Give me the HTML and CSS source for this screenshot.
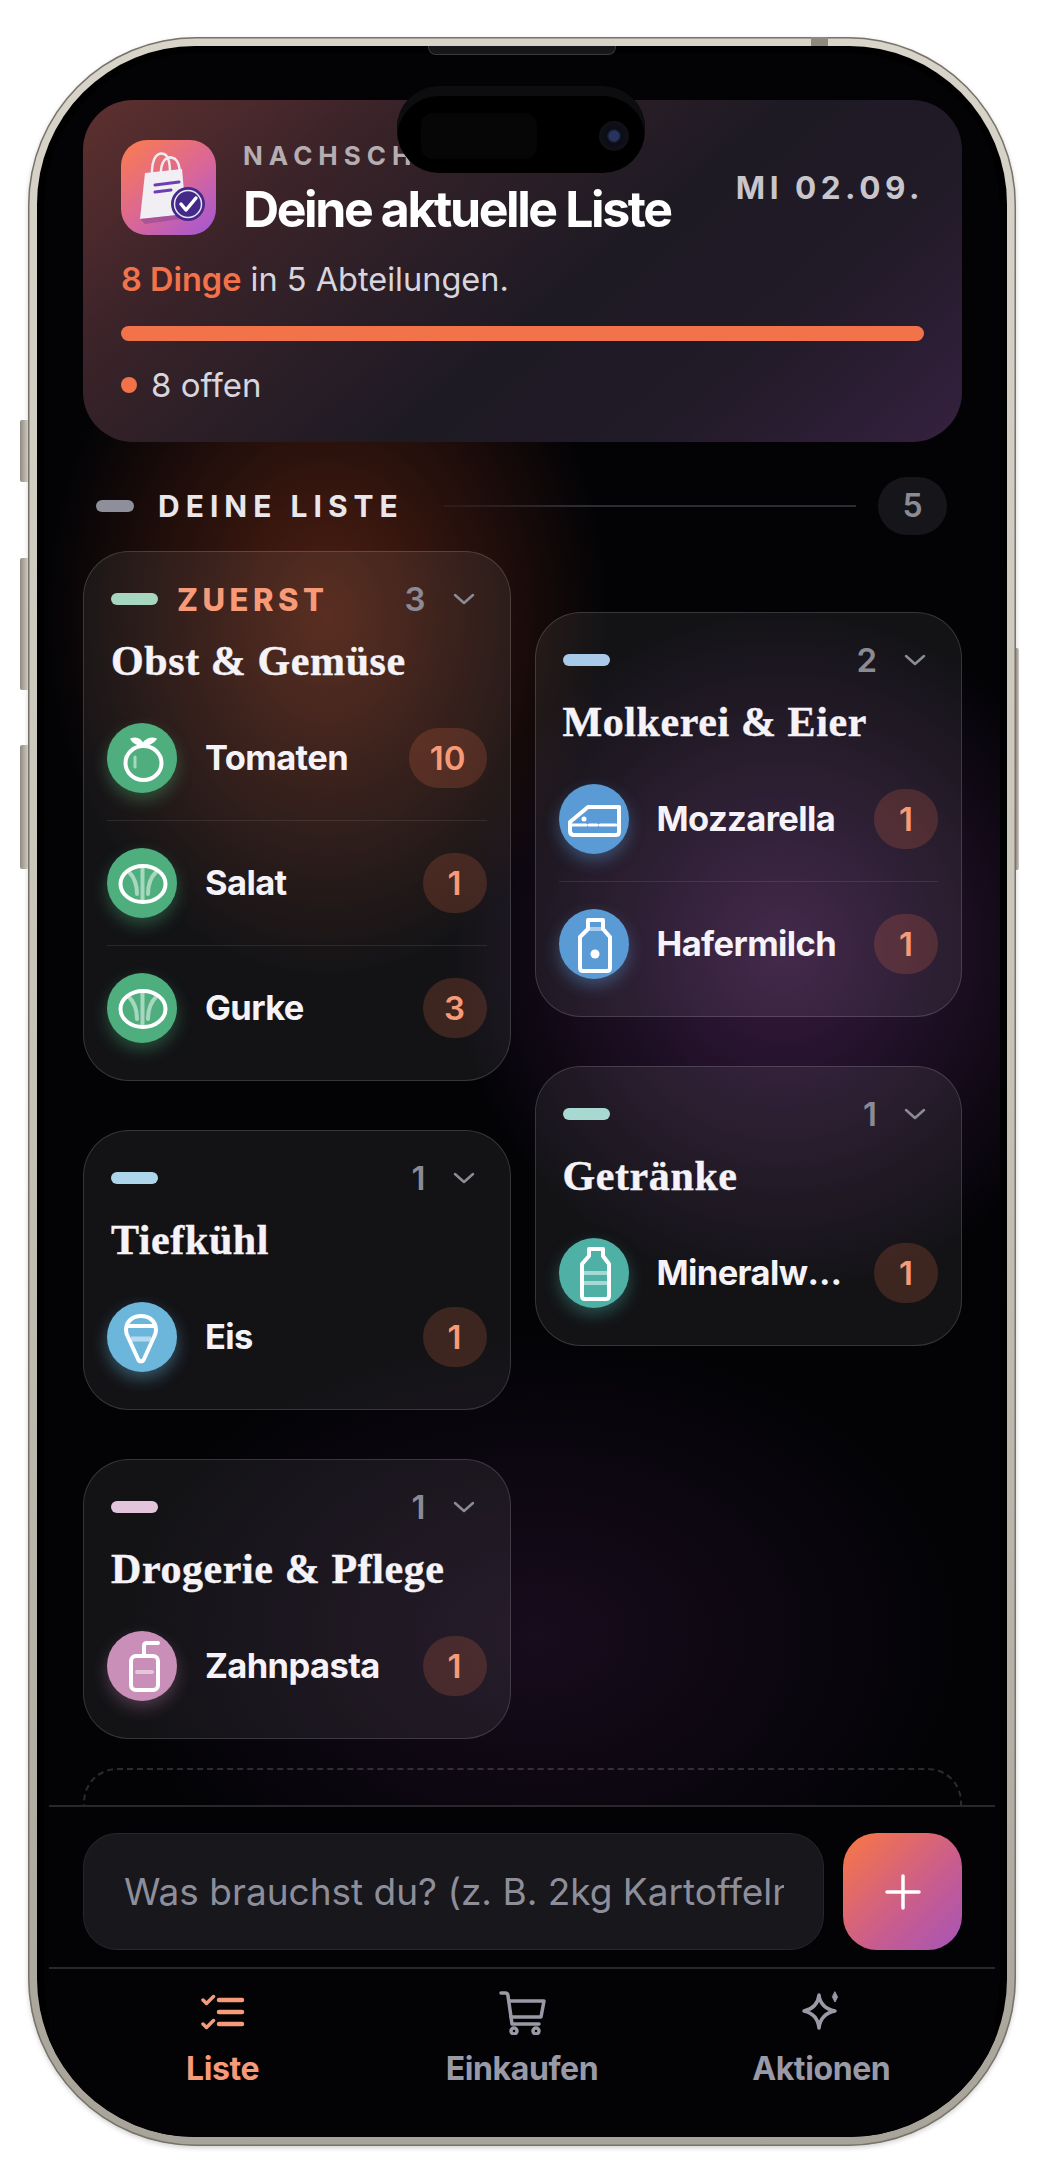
FILE: index.html
```html
<!DOCTYPE html>
<html lang="de">
<head>
    <meta charset="UTF-8">
    <title>Nachschub</title>
    <link rel="stylesheet" href="styles.css">
</head>
<body>
<div class="phone">
    <span class="side-btn mute"></span>
    <span class="side-btn vol-up"></span>
    <span class="side-btn vol-down"></span>
    <span class="side-btn power"></span>
    <span class="band band-top"></span>
    <div class="screen">
        <span class="speaker"></span>
        <div class="island"><span class="sensor"></span><span class="lens"></span></div>

        <main class="main">
            <section class="hero">
                <div class="hero-head">
                    <div class="app-icon">
                        <svg viewBox="0 0 95 95" width="95" height="95">
                            <path d="M31 37C30 15 38 12 43 14C48 16 49 24 49 33" fill="none" stroke="#ececf0" stroke-width="2.5"/>
                            <path d="M40 36C39 19 47 16 52 18C58 20 59 28 59 36" fill="none" stroke="#ececf0" stroke-width="2.5"/>
                            <path d="M24 33L61 29L65 74L19 79Z" fill="#f1eff3"/>
                            <path d="M19 79L65 74L66 78L24 84Z" fill="#7d3f8a" opacity=".45"/>
                            <path d="M34 45L58 42M34 52L50 50" stroke="#6a3fb5" stroke-width="3" stroke-linecap="round"/>
                            <circle cx="67" cy="64" r="17" fill="#44298a"/>
                            <circle cx="67" cy="64" r="13.5" fill="none" stroke="#e9e4f5" stroke-width="1.5"/>
                            <path d="M60 64L65 70L75 58" fill="none" stroke="#fff" stroke-width="3.5" stroke-linecap="round" stroke-linejoin="round"/>
                        </svg>
                    </div>
                    <div class="hero-titles">
                        <div class="eyebrow">NACHSCHUB</div>
                        <h1>Deine aktuelle Liste</h1>
                    </div>
                    <div class="hero-date">MI 02.09.</div>
                </div>
                <p class="summary"><b>8 Dinge</b> in 5 Abteilungen.</p>
                <div class="bar"></div>
                <div class="open-count"><i class="dot"></i>8 offen</div>
            </section>

            <div class="section-head">
                <span class="pill pill-grey"></span>
                <h2>DEINE LISTE</h2>
                <span class="section-line"></span>
                <span class="section-count">5</span>
            </div>

            <div class="columns">
                <div class="col">
                    <article class="card">
                        <div class="card-head">
                            <span class="pill pill-green"></span>
                            <span class="first-tag">ZUERST</span>
                            <span class="count">3</span>
                            <svg class="chev" viewBox="0 0 22 12"><path d="M2 2L11 10L20 2"/></svg>
                        </div>
                        <h3>Obst &amp; Gemüse</h3>
                        <ul class="rows">
                            <li class="row">
                                <span class="ic ic-green">
                                    <svg viewBox="0 0 70 70">
                                        <ellipse cx="36.5" cy="40" rx="18" ry="17"/>
                                        <path d="M36 23C31 22 26 20 24 16C30 14 34 17 36 21C38 17 43 14 49 16C46 20 41 22 36 23Z" fill="#fff" stroke-width="1.5"/>
                                        <path class="soft" d="M28 34V44" stroke-width="3"/>
                                    </svg>
                                </span>
                                <span class="name">Tomaten</span>
                                <span class="qty">10</span>
                            </li>
                            <li class="row">
                                <span class="ic ic-green">
                                    <svg viewBox="0 0 70 70">
                                        <path class="soft" d="M35.500 18V54M22 24C27 29 30 36 30 46M49 24C44 29 41 36 41 46"/>
                                        <ellipse cx="36" cy="36" rx="22.500" ry="18"/>
                                    </svg>
                                </span>
                                <span class="name">Salat</span>
                                <span class="qty">1</span>
                            </li>
                            <li class="row">
                                <span class="ic ic-green">
                                    <svg viewBox="0 0 70 70">
                                        <path class="soft" d="M35.500 18V54M22 24C27 29 30 36 30 46M49 24C44 29 41 36 41 46"/>
                                        <ellipse cx="36" cy="36" rx="22.500" ry="18"/>
                                    </svg>
                                </span>
                                <span class="name">Gurke</span>
                                <span class="qty">3</span>
                            </li>
                        </ul>
                    </article>

                    <article class="card">
                        <div class="card-head">
                            <span class="pill pill-sky"></span>
                            <span class="count">1</span>
                            <svg class="chev" viewBox="0 0 22 12"><path d="M2 2L11 10L20 2"/></svg>
                        </div>
                        <h3>Tiefkühl</h3>
                        <ul class="rows">
                            <li class="row">
                                <span class="ic ic-sky">
                                    <svg viewBox="0 0 70 70">
                                        <path d="M19 28C19 19 26 14 34 14C42 14 49 19 49 28C49 31 48 33 47 35L37 57C36 60 32 60 31 57L21 35C20 33 19 31 19 28Z"/>
                                        <path d="M20 24H48"/>
                                        <path class="soft" d="M24 37H44" stroke-width="5" stroke-linecap="butt"/>
                                    </svg>
                                </span>
                                <span class="name">Eis</span>
                                <span class="qty">1</span>
                            </li>
                        </ul>
                    </article>

                    <article class="card">
                        <div class="card-head">
                            <span class="pill pill-pink"></span>
                            <span class="count">1</span>
                            <svg class="chev" viewBox="0 0 22 12"><path d="M2 2L11 10L20 2"/></svg>
                        </div>
                        <h3>Drogerie &amp; Pflege</h3>
                        <ul class="rows">
                            <li class="row">
                                <span class="ic ic-pink">
                                    <svg viewBox="0 0 70 70">
                                        <rect x="24" y="25" width="27" height="34" rx="5"/>
                                        <path d="M37 25V15C37 13 38 12 40 12H51"/>
                                        <path class="soft" d="M30 41H45"/>
                                    </svg>
                                </span>
                                <span class="name">Zahnpasta</span>
                                <span class="qty">1</span>
                            </li>
                        </ul>
                    </article>
                </div>

                <div class="col col-right">
                    <article class="card">
                        <div class="card-head">
                            <span class="pill pill-blue"></span>
                            <span class="count">2</span>
                            <svg class="chev" viewBox="0 0 22 12"><path d="M2 2L11 10L20 2"/></svg>
                        </div>
                        <h3>Molkerei &amp; Eier</h3>
                        <ul class="rows">
                            <li class="row">
                                <span class="ic ic-blue">
                                    <svg viewBox="0 0 70 70">
                                        <path d="M11 38L29 23H60V48C60 50 59 51 57 51H15C12 51 11 49 11 47Z"/>
                                        <path d="M11 41H60" stroke-width="3" stroke-dasharray="16 3 8 3"/>
                                        <circle cx="25" cy="35" r="2.500" fill="#fff" stroke="none"/>
                                    </svg>
                                </span>
                                <span class="name">Mozzarella</span>
                                <span class="qty">1</span>
                            </li>
                            <li class="row">
                                <span class="ic ic-blue">
                                    <svg viewBox="0 0 70 70">
                                        <path d="M29 11H44V20L51 28V59C51 61 50 62 48 62H24C22 62 21 61 21 59V28L29 20Z"/>
                                        <path class="soft" d="M29 20H44"/>
                                        <circle cx="36" cy="45" r="4.500" fill="#fff" stroke="none"/>
                                    </svg>
                                </span>
                                <span class="name">Hafermilch</span>
                                <span class="qty">1</span>
                            </li>
                        </ul>
                    </article>

                    <article class="card">
                        <div class="card-head">
                            <span class="pill pill-mint"></span>
                            <span class="count">1</span>
                            <svg class="chev" viewBox="0 0 22 12"><path d="M2 2L11 10L20 2"/></svg>
                        </div>
                        <h3>Getränke</h3>
                        <ul class="rows">
                            <li class="row">
                                <span class="ic ic-teal">
                                    <svg viewBox="0 0 70 70">
                                        <path d="M30 11H44V18L50 26V58C50 60 49 61 47 61H26C24 61 23 60 23 58V26L30 18Z"/>
                                        <path class="soft" d="M23 35H50M23 45H50"/>
                                    </svg>
                                </span>
                                <span class="name">Mineralwasser</span>
                                <span class="qty">1</span>
                            </li>
                        </ul>
                    </article>
                </div>
            </div>

            <div class="dashed-card"></div>
        </main>

        <form class="composer">
            <input class="composer-input" type="text" placeholder="Was brauchst du? (z. B. 2kg Kartoffeln)">
            <button class="add-btn" type="button">
                <svg viewBox="0 0 36 36" width="36" height="36"><path d="M18 2V34M2 18H34"/></svg>
            </button>
        </form>

        <nav class="tabs">
            <a class="tab active">
                <svg viewBox="0 0 44 44" width="44" height="44">
                    <path d="M2 9L5.500 12.500L12.500 5.500M2 33L5.500 36.500L12.500 29.500"/>
                    <path class="tab-bars" d="M18 9H41M18 21H41M18 33H41"/>
                </svg>
                <span>Liste</span>
            </a>
            <a class="tab">
                <svg viewBox="0 0 48 44" width="48" height="44">
                    <path d="M3 2H7C9 2 10 3 10 5L14 33H41"/>
                    <path d="M11 10H46L43 26H13"/>
                    <circle cx="16" cy="40" r="3"/>
                    <circle cx="38" cy="40" r="3"/>
                </svg>
                <span>Einkaufen</span>
            </a>
            <a class="tab">
                <svg viewBox="0 0 44 44" width="44" height="44">
                    <path d="M20 4C21 13 26 18 36 20C26 22 21 27 20 37C19 27 14 22 5 20C14 18 19 13 20 4Z"/>
                    <path class="tab-spark" d="M36 1L38.500 6L36 11L33.500 6Z"/>
                </svg>
                <span>Aktionen</span>
            </a>
        </nav>
    </div>
</div>
</body>
</html>
```

FILE: styles.css
```css
* {
    box-sizing: border-box;
}
body {
    margin: 0;
    width: 1040px;
    height: 2162px;
    overflow: hidden;
    background: #fff;
    font-family: Inter, "Liberation Sans", sans-serif;
    color: #f5f3f7;
}
h1, h2, h3, p, ul {
    margin: 0;
    padding: 0;
}
ul {
    list-style: none;
}

/* phone shell */
.phone {
    position: relative;
    width: 988px;
    height: 2109px;
    margin: 37px 0 0 28px;
    padding: 9px;
    border-radius: 168px;
    background: linear-gradient(180deg, #d9d4c9 0%, #c9c4b8 45%, #a8a499 100%);
    box-shadow: inset 0 0 0 1.5px #77736a, 0 2px 5px rgba(0, 0, 0, 0.18);
}
.side-btn {
    position: absolute;
    background: linear-gradient(90deg, #8f8b82, #cfcabf);
}
.mute { left: -8px; top: 383px; width: 8px; height: 62px; border-radius: 2px 0 0 2px; }
.vol-up { left: -8px; top: 521px; width: 8px; height: 132px; border-radius: 2px 0 0 2px; }
.vol-down { left: -8px; top: 708px; width: 8px; height: 124px; border-radius: 2px 0 0 2px; }
.power { right: -3px; top: 611px; width: 3px; height: 222px; border-radius: 0 2px 2px 0; }
.band {
    position: absolute;
    background: #8d897f;
}
.band-top { left: 783px; top: 0; width: 17px; height: 9px; }

.screen {
    position: relative;
    display: flex;
    flex-direction: column;
    height: 100%;
    padding: 54px 12px 0;
    overflow: hidden;
    border-radius: 158px;
    background-color: #030306;
    background-image:
        radial-gradient(ellipse 280px 360px at 290px 570px, rgba(150, 58, 30, 0.52), rgba(150, 58, 30, 0) 100%),
        radial-gradient(ellipse 330px 340px at 745px 905px, rgba(112, 52, 128, 0.48), rgba(112, 52, 128, 0) 100%),
        radial-gradient(ellipse 420px 300px at 500px 1590px, rgba(78, 36, 88, 0.28), rgba(78, 36, 88, 0) 100%);
    box-shadow: inset 0 0 0 7px #000;
}
.speaker {
    position: absolute;
    left: 391px;
    top: 0;
    width: 188px;
    height: 9px;
    border-radius: 0 0 8px 8px;
    background: #17171a;
    border: 1px solid #3a3a3e;
    border-top: none;
}
.island {
    position: absolute;
    left: 360px;
    top: 40px;
    z-index: 5;
    width: 248px;
    height: 87px;
    border-radius: 42px;
    background: #000;
    box-shadow: inset 0 10px 0 #0d0d0f;
}
.sensor {
    position: absolute;
    left: 24px;
    top: 27px;
    width: 116px;
    height: 46px;
    border-radius: 12px;
    background: #060607;
}
.lens {
    position: absolute;
    left: 202px;
    top: 35px;
    width: 30px;
    height: 30px;
    border-radius: 50%;
    background: radial-gradient(circle, #28345e 0 22%, #0b0d16 34%, #111116 70%, #08080a 100%);
}

.main {
    flex: 1;
    min-height: 0;
    overflow: hidden;
    padding: 0 33px 0 34px;
}

/* hero card */
.hero {
    height: 342px;
    padding: 40px 38px 0;
    border-radius: 50px;
    background: linear-gradient(140deg, #5f302f 0%, #3a2329 24%, #1e1a24 55%, #211a27 75%, #35213f 100%);
}
.hero-head {
    display: flex;
    align-items: center;
    gap: 27px;
}
.app-icon {
    flex: none;
    width: 95px;
    height: 95px;
    border-radius: 26px;
    background: linear-gradient(140deg, #f6785a 10%, #d8669a 55%, #a758d0 95%);
}
.app-icon svg {
    display: block;
}
.hero-titles {
    flex: 1;
}
.eyebrow {
    font-size: 26px;
    line-height: 30px;
    font-weight: 700;
    letter-spacing: 6px;
    color: #b5adb0;
}
.hero-titles h1 {
    margin-top: 12px;
    font-size: 50px;
    line-height: 52px;
    font-weight: 700;
    letter-spacing: -2.4px;
    color: #fff;
}
.hero-date {
    font-size: 31.5px;
    font-weight: 700;
    letter-spacing: 4.5px;
    color: #c8c5cd;
}
.summary {
    margin-top: 25px;
    font-size: 32.5px;
    line-height: 40px;
    color: #d8d5dc;
}
.summary b {
    font-weight: 600;
    color: #f2724a;
}
.bar {
    height: 15px;
    margin-top: 26px;
    border-radius: 8px;
    background: #f2724a;
}
.open-count {
    display: flex;
    align-items: center;
    gap: 14px;
    margin-top: 24px;
    font-size: 33px;
    line-height: 40px;
    color: #d8d5dc;
}
.dot {
    width: 16px;
    height: 16px;
    border-radius: 50%;
    background: #f2724a;
}

/* section header */
.section-head {
    display: flex;
    align-items: center;
    height: 58px;
    margin-top: 35px;
    padding: 0 15px 0 13px;
}
.pill {
    flex: none;
    width: 47px;
    height: 12px;
    border-radius: 6px;
}
.pill-grey { width: 38px; background: #8f8f9c; }
.pill-green { background: #a6d6bd; }
.pill-sky { background: #aed6ea; }
.pill-pink { background: #e2c4dc; }
.pill-blue { background: #a9c9e8; }
.pill-mint { background: #a8d8d2; }
.section-head h2 {
    margin-left: 24px;
    font-size: 30px;
    font-weight: 700;
    letter-spacing: 6px;
    color: #e9e7ec;
}
.section-line {
    flex: 1;
    height: 1.5px;
    margin: 0 22px 0 40px;
    background: linear-gradient(90deg, rgba(70, 72, 84, 0.2), #2c2c34 30%);
}
.section-count {
    flex: none;
    width: 69px;
    height: 58px;
    border-radius: 29px;
    background: #16161a;
    text-align: center;
    font-size: 32px;
    font-weight: 600;
    line-height: 58px;
    color: #8b8b96;
}

/* category cards */
.columns {
    display: flex;
    gap: 24px;
    margin-top: 16px;
}
.col {
    display: flex;
    flex: 1;
    flex-direction: column;
    gap: 49px;
    min-width: 0;
}
.col-right {
    margin-top: 61px;
}
.card {
    padding: 32px 23px 10px;
    border: 1.5px solid rgba(255, 255, 255, 0.15);
    border-radius: 46px;
    background: rgba(255, 255, 255, 0.065);
}
.card-head {
    display: flex;
    align-items: center;
    height: 30px;
    padding: 0 12px 0 4px;
}
.first-tag {
    margin-left: 19px;
    font-size: 31px;
    font-weight: 800;
    letter-spacing: 4.5px;
    color: #f79a78;
}
.count {
    margin-left: auto;
    font-size: 33px;
    font-weight: 600;
    color: #8b8b96;
}
.chev {
    width: 22px;
    height: 12px;
    margin-left: 27px;
    fill: none;
    stroke: #8b8b96;
    stroke-width: 2.5;
    stroke-linecap: round;
    stroke-linejoin: round;
}
.card h3 {
    margin: 25px 0 0 4px;
    font-family: "Liberation Serif", serif;
    font-size: 42px;
    line-height: 44px;
    font-weight: 700;
    letter-spacing: 0.6px;
    -webkit-text-stroke: 0.4px #f5f3f7;
    color: #f5f3f7;
}
.rows {
    margin-top: 13px;
}
.row {
    display: flex;
    align-items: center;
    gap: 28px;
    padding: 27px 0;
}
.row + .row {
    border-top: 1.5px solid rgba(255, 255, 255, 0.09);
}
.name {
    flex: 1;
    min-width: 0;
    overflow: hidden;
    white-space: nowrap;
    text-overflow: ellipsis;
    font-size: 34.5px;
    line-height: 44px;
    font-weight: 700;
    letter-spacing: -0.6px;
    color: #f5f3f7;
}
.qty {
    flex: none;
    min-width: 64px;
    height: 60px;
    padding: 0 21px;
    border-radius: 30px;
    background: rgba(255, 120, 80, 0.18);
    text-align: center;
    font-size: 33px;
    font-weight: 600;
    line-height: 60px;
    color: #f79a78;
}
.ic {
    flex: none;
    width: 70px;
    height: 70px;
    border-radius: 50%;
}
.ic svg {
    display: block;
    width: 70px;
    height: 70px;
    fill: none;
    stroke: #fff;
    stroke-width: 4;
    stroke-linecap: round;
    stroke-linejoin: round;
}
.ic .soft {
    opacity: 0.5;
}
.ic-green { background: #4fae7e; box-shadow: 0 7px 16px rgba(79, 190, 130, 0.35); }
.ic-sky { background: #6cb6dc; box-shadow: 0 7px 16px rgba(108, 190, 230, 0.4); }
.ic-pink { background: #c98fb8; box-shadow: 0 7px 16px rgba(201, 143, 184, 0.3); }
.ic-blue { background: #5b9bd5; box-shadow: 0 7px 16px rgba(91, 155, 213, 0.4); }
.ic-teal { background: #4fb0a6; box-shadow: 0 7px 16px rgba(79, 190, 175, 0.35); }

.dashed-card {
    height: 140px;
    margin-top: 29px;
    border: 2px dashed rgba(255, 255, 255, 0.16);
    border-radius: 34px;
}

/* composer and tabs */
.composer {
    display: flex;
    flex: none;
    gap: 19px;
    height: 162px;
    padding: 26px 33px 19px 34px;
    border-top: 2px solid #27272c;
    background: #030306;
}
.composer-input {
    flex: 1;
    min-width: 0;
    height: 117px;
    padding: 0 39px 0 40px;
    border: 1.5px solid #26262c;
    border-radius: 34px;
    outline: none;
    background: #17171c;
    font-family: Inter, "Liberation Sans", sans-serif;
    font-size: 37px;
    color: #f5f3f7;
}
.composer-input::placeholder {
    color: #8e8e9a;
    opacity: 1;
}
.add-btn {
    flex: none;
    width: 119px;
    height: 117px;
    padding: 0;
    border: none;
    border-radius: 34px;
    background: linear-gradient(135deg, #f2734f 10%, #c85c8f 60%, #a555b8 100%);
}
.add-btn svg {
    display: block;
    margin: auto;
    fill: none;
    stroke: #fff;
    stroke-width: 3.5;
    stroke-linecap: round;
}
.tabs {
    display: flex;
    flex: none;
    height: 170px;
    padding: 0 24px;
    border-top: 2px solid #27272c;
    background: #030306;
}
.tab {
    display: flex;
    flex: 1;
    flex-direction: column;
    align-items: center;
    gap: 14px;
    padding-top: 22px;
    font-size: 32px;
    line-height: 40px;
    font-weight: 700;
    letter-spacing: -0.4px;
    color: #9a9aa6;
}
.tab svg {
    fill: none;
    stroke: currentColor;
    stroke-width: 3.500;
    stroke-linecap: round;
    stroke-linejoin: round;
}
.tab .tab-bars {
    stroke-width: 4.500;
}
.tab .tab-spark {
    fill: currentColor;
    stroke-width: 1;
}
.tab.active {
    color: #f79a78;
}
```
